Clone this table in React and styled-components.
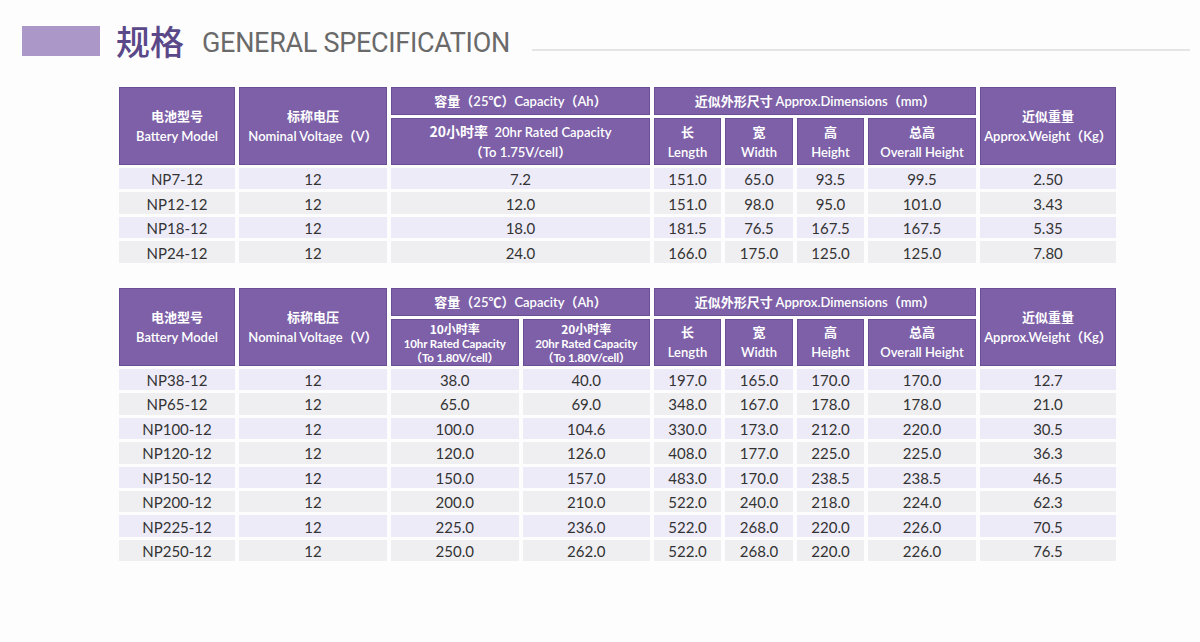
import React from "react";
import styled, { createGlobalStyle } from "styled-components";

const GlobalStyle = createGlobalStyle`
  html, body {
    margin: 0;
    padding: 0;
    background: #fdfdfd;
  }
  body {
    font-family: Lato, "Noto Sans", "Noto Sans CJK SC", sans-serif;
  }
`;

const COLS = "116px 148px 127.5px 127.5px 67px 68px 67px 108px 136px";

const table1 = [
  ["NP7-12", "12", "7.2", "151.0", "65.0", "93.5", "99.5", "2.50"],
  ["NP12-12", "12", "12.0", "151.0", "98.0", "95.0", "101.0", "3.43"],
  ["NP18-12", "12", "18.0", "181.5", "76.5", "167.5", "167.5", "5.35"],
  ["NP24-12", "12", "24.0", "166.0", "175.0", "125.0", "125.0", "7.80"],
];

const table2 = [
  ["NP38-12", "12", "38.0", "40.0", "197.0", "165.0", "170.0", "170.0", "12.7"],
  ["NP65-12", "12", "65.0", "69.0", "348.0", "167.0", "178.0", "178.0", "21.0"],
  ["NP100-12", "12", "100.0", "104.6", "330.0", "173.0", "212.0", "220.0", "30.5"],
  ["NP120-12", "12", "120.0", "126.0", "408.0", "177.0", "225.0", "225.0", "36.3"],
  ["NP150-12", "12", "150.0", "157.0", "483.0", "170.0", "238.5", "238.5", "46.5"],
  ["NP200-12", "12", "200.0", "210.0", "522.0", "240.0", "218.0", "224.0", "62.3"],
  ["NP225-12", "12", "225.0", "236.0", "522.0", "268.0", "220.0", "226.0", "70.5"],
  ["NP250-12", "12", "250.0", "262.0", "522.0", "268.0", "220.0", "226.0", "76.5"],
];

const App = () => {
  return (
    <Page>
      <GlobalStyle />
      <TitleBar>
        <TitleBlock />
        <TitleCn>规格</TitleCn>
        <TitleEn>GENERAL SPECIFICATION</TitleEn>
        <TitleLine />
      </TitleBar>

      <Tables>
        <Grid>
          <Head $rows={2}>
            <Cn>电池型号</Cn>
            <En>Battery Model</En>
          </Head>
          <Head $rows={2}>
            <Cn>标称电压</Cn>
            <En>Nominal Voltage（V）</En>
          </Head>
          <Head $cols={2}>
            <Line>
              <Cn>容量</Cn>
              <En>（25℃）Capacity（Ah）</En>
            </Line>
          </Head>
          <Head $cols={4}>
            <Line>
              <Cn>近似外形尺寸</Cn>
              <En>&nbsp;Approx.Dimensions（mm）</En>
            </Line>
          </Head>
          <Head $rows={2}>
            <Cn>近似重量</Cn>
            <En>Approx.Weight（Kg）</En>
          </Head>
          <Head $cols={2}>
            <Line>
              <Cn $big>20小时率</Cn>
              <En>&nbsp;&nbsp;20hr Rated Capacity</En>
            </Line>
            <En>（To 1.75V/cell）</En>
          </Head>
          <DimHeads />

          {table1.map((row, i) =>
            row.map((v, j) => (
              <Data key={i + "-" + j} $cols={j === 2 ? 2 : 1} $alt={i % 2 === 1}>
                {v}
              </Data>
            ))
          )}
        </Grid>

        <Grid>
          <Head $rows={2}>
            <Cn>电池型号</Cn>
            <En>Battery Model</En>
          </Head>
          <Head $rows={2}>
            <Cn>标称电压</Cn>
            <En>Nominal Voltage（V）</En>
          </Head>
          <Head $cols={2}>
            <Line>
              <Cn>容量</Cn>
              <En>（25℃）Capacity（Ah）</En>
            </Line>
          </Head>
          <Head $cols={4}>
            <Line>
              <Cn>近似外形尺寸</Cn>
              <En>&nbsp;Approx.Dimensions（mm）</En>
            </Line>
          </Head>
          <Head $rows={2}>
            <Cn>近似重量</Cn>
            <En>Approx.Weight（Kg）</En>
          </Head>
          <Head>
            <SmallCn>10小时率</SmallCn>
            <Small>10hr Rated Capacity</Small>
            <Small>（To 1.80V/cell）</Small>
          </Head>
          <Head>
            <SmallCn>20小时率</SmallCn>
            <Small>20hr Rated Capacity</Small>
            <Small>（To 1.80V/cell）</Small>
          </Head>
          <DimHeads />

          {table2.map((row, i) =>
            row.map((v, j) => (
              <Data key={i + "-" + j} $alt={i % 2 === 1}>
                {v}
              </Data>
            ))
          )}
        </Grid>
      </Tables>
    </Page>
  );
};

const DimHeads = () => (
  <>
    <Head>
      <Cn>长</Cn>
      <En>Length</En>
    </Head>
    <Head>
      <Cn>宽</Cn>
      <En>Width</En>
    </Head>
    <Head>
      <Cn>高</Cn>
      <En>Height</En>
    </Head>
    <Head>
      <Cn>总高</Cn>
      <En>Overall Height</En>
    </Head>
  </>
);

export default App;

const Page = styled.div`
  width: 1200px;
  height: 642px;
  box-sizing: border-box;
  padding-top: 24px;
  overflow: hidden;
`;

const TitleBar = styled.div`
  display: flex;
  align-items: center;
  height: 34px;
  padding-left: 22px;
`;

const TitleBlock = styled.div`
  width: 78px;
  height: 30px;
  background: #ab98c8;
  margin-right: 16px;
`;

const TitleCn = styled.div`
  font-family: "Noto Sans CJK SC", sans-serif;
  font-size: 34px;
  font-weight: 500;
  color: #5a4889;
  line-height: 34px;
  margin-right: 18px;
`;

const TitleEn = styled.div`
  font-family: Roboto, sans-serif;
  font-size: 27px;
  color: #6a6a6a;
  letter-spacing: -0.3px;
  line-height: 34px;
  margin-top: 4px;
`;

const TitleLine = styled.div`
  flex: 1;
  height: 2px;
  background: #e5e5e7;
  margin-left: 22px;
  margin-right: 10px;
  margin-top: 17px;
`;

const Tables = styled.div`
  display: flex;
  flex-direction: column;
  gap: 25px;
  padding-left: 119px;
  margin-top: 29px;
`;

const Grid = styled.div`
  display: grid;
  grid-template-columns: ${COLS};
  grid-template-rows: 28px 47px;
  grid-auto-rows: 21.45px;
  column-gap: 4px;
  row-gap: 3px;
`;

const Head = styled.div`
  grid-column: span ${(p) => p.$cols || 1};
  grid-row: span ${(p) => p.$rows || 1};
  background: #7d60a8;
  border: 1px solid #6a4e96;
  box-sizing: border-box;
  color: #fff;
  display: flex;
  flex-direction: column;
  align-items: center;
  justify-content: center;
  text-align: center;
  line-height: 20px;
  white-space: nowrap;
`;

const Line = styled.div`
  display: flex;
  align-items: baseline;
  justify-content: center;
`;

const Cn = styled.span`
  font-family: "Noto Sans CJK SC", sans-serif;
  font-weight: 700;
  font-size: ${(p) => (p.$big ? "14px" : "13px")};
`;

const En = styled.span`
  font-family: Lato, "Noto Sans CJK SC", sans-serif;
  font-size: 13px;
  font-weight: 600;
`;

const SmallCn = styled.span`
  font-family: "Noto Sans CJK SC", sans-serif;
  font-weight: 700;
  font-size: 12px;
  line-height: 17.5px;
`;

const Small = styled.span`
  font-family: Lato, "Noto Sans CJK SC", sans-serif;
  font-size: 11.5px;
  font-weight: 700;
  letter-spacing: -0.1px;
  line-height: 13.8px;
`;

const Data = styled.div`
  grid-column: span ${(p) => p.$cols || 1};
  background: ${(p) => (p.$alt ? "#efeff2" : "#eeebf8")};
  color: #333;
  font-family: Lato, sans-serif;
  font-size: 15px;
  padding-top: 1px;
  display: flex;
  align-items: center;
  justify-content: center;
`;
